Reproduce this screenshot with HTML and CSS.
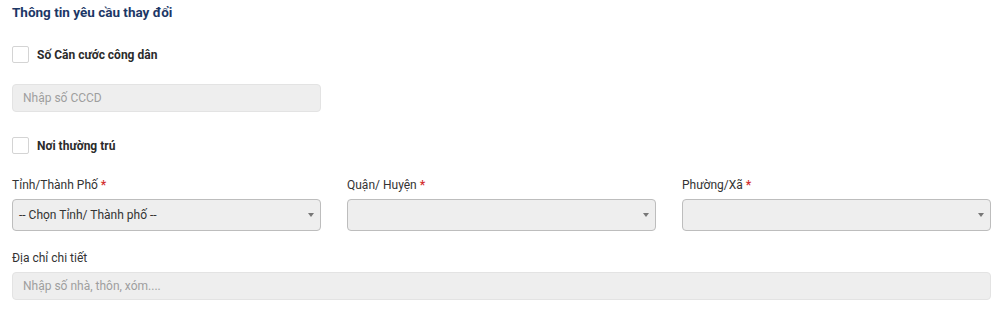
FILE: index.html
```html
<!DOCTYPE html>
<html lang="vi">
<head>
<meta charset="utf-8">
<link rel="stylesheet" href="styles.css">
</head>
<body>
<div class="form">
  <h3 class="title">Thông tin yêu cầu thay đổi</h3>

  <label class="check"><span class="box"></span><span class="check-label">Số Căn cước công dân</span></label>
  <div class="field-half">
    <div class="input">Nhập số CCCD</div>
  </div>

  <label class="check"><span class="box"></span><span class="check-label">Nơi thường trú</span></label>

  <div class="grid">
    <div class="col">
      <div class="label">Tỉnh/Thành Phố <span class="req">*</span></div>
      <div class="select"><span class="sel-text">-- Chọn Tỉnh/ Thành phố --</span><span class="caret"></span></div>
    </div>
    <div class="col">
      <div class="label">Quận/ Huyện <span class="req">*</span></div>
      <div class="select"><span class="sel-text"></span><span class="caret"></span></div>
    </div>
    <div class="col">
      <div class="label">Phường/Xã <span class="req">*</span></div>
      <div class="select"><span class="sel-text"></span><span class="caret"></span></div>
    </div>
  </div>

  <div class="label label-addr">Địa chỉ chi tiết</div>
  <div class="input input-wide">Nhập số nhà, thôn, xóm....</div>
</div>
</body>
</html>
```

FILE: styles.css
```css
* { box-sizing: border-box; }
html, body { margin: 0; padding: 0; background: #fff; }
body { font-family: Roboto, "Noto Sans", Arial, sans-serif; color: #333; }

.form { padding: 3px 9px 0 12px; width: 1000px; }

.title {
  margin: 0;
  font-size: 13.5px;
  font-weight: 700;
  color: #1c3766;
  line-height: 18px;
}

.check {
  display: flex;
  align-items: center;
  gap: 8px;
  margin-top: 25px;
  height: 17px;
}
.box {
  width: 17px;
  height: 17px;
  border: 1px solid #d4d4d4;
  border-radius: 2px;
  background: #fff;
  flex: none;
}
.check-label {
  font-size: 12px;
  font-weight: 700;
  color: #2b2b2b;
}

.field-half { width: 309px; margin-top: 21px; }

.input {
  height: 28px;
  background: #eeeeee;
  border: 1px solid #e3e3e3;
  border-radius: 4px;
  padding: 0 10px;
  font-size: 12px;
  color: #9e9e9e;
  display: flex;
  align-items: center;
}
.input-wide { width: 979px; margin-top: 6px; }

.grid {
  display: grid;
  grid-template-columns: 309px 309px 309px;
  column-gap: 26px;
  margin-top: 23px;
}
.label {
  font-size: 12px;
  color: #333;
  line-height: 16px;
}
.req { color: #d32f2f; font-weight: 700; }
.select {
  margin-top: 6px;
  height: 32px;
  background: #eeeeee;
  border: 1px solid #bdbdbd;
  border-radius: 4px;
  display: flex;
  align-items: center;
  justify-content: space-between;
  padding: 0 6px 0 6px;
  font-size: 12px;
  color: #333;
}
.caret {
  width: 0;
  height: 0;
  border-left: 3.5px solid transparent;
  border-right: 3.5px solid transparent;
  border-top: 4px solid #777;
}
.label-addr { margin-top: 19px; }
```
